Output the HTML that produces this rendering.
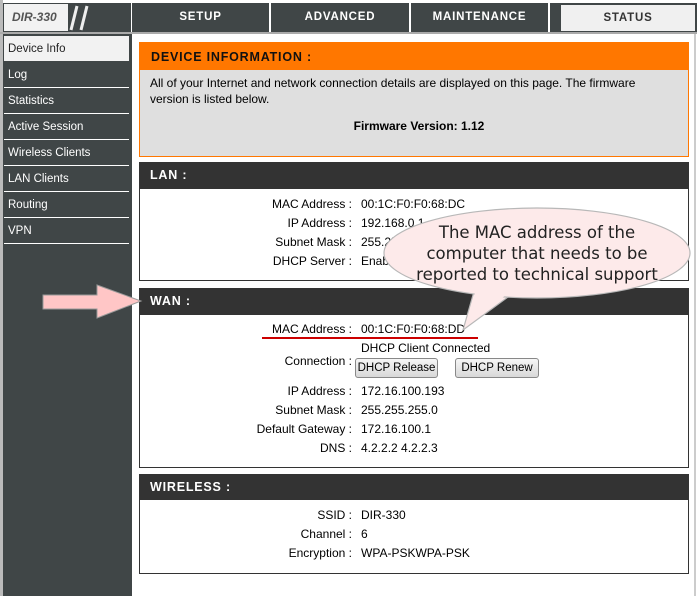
<!DOCTYPE html>
<html><head><style>
*{margin:0;padding:0;box-sizing:border-box}
body{width:697px;height:596px;background:#fff;position:relative;overflow:hidden;font-family:"Liberation Sans",Tahoma,sans-serif;font-size:12px;color:#000}
.abs{position:absolute}
.tab{position:absolute;top:3px;height:29px;background:#404647;color:#fff;font-weight:bold;font-size:11.5px;letter-spacing:0.8px;text-align:center;line-height:29px}
.side{position:absolute;left:3px;top:34px;width:129px;height:562px;background:#404647}
.si{position:absolute;left:1px;width:125px;height:26px;color:#fff;font-size:11.5px;line-height:26px;padding-left:4px;border-bottom:1px solid #fff}
.hd{position:absolute;left:139px;width:550px;height:27px;background:#333;color:#fff;font-weight:bold;font-size:12.5px;letter-spacing:0.8px;line-height:27px;padding-left:11px}
.bx{position:absolute;left:139px;width:550px;border:1px solid #333;border-top:none;background:#fff}
.l{position:absolute;width:352px;text-align:right;left:0}
.v{position:absolute;left:361px}
.btn{position:absolute;height:20px;border:1px solid #888;border-radius:3px;background:linear-gradient(#f6f6f6,#d8d8d8);font-size:11.5px;line-height:18px;text-align:center}
</style></head><body>
<div class="abs" style="left:0;top:0;width:3px;height:596px;background:#bbb"></div>
<div class="abs" style="left:3px;top:3px;width:128px;height:29px;background:#404647"></div>
<div class="abs" style="left:4px;top:4px;width:64px;height:27px;background:#f2f2f2;font-style:italic;font-weight:bold;color:#555;font-size:12px;line-height:27px;padding-left:8px">DIR-330</div>
<svg class="abs" style="left:68px;top:4px" width="30" height="28"><path d="M3 26 L9 2 M13 26 L19 2" stroke="#eee" stroke-width="3"/></svg>
<div class="tab" style="left:132px;width:137px">SETUP</div>
<div class="tab" style="left:271px;width:138px">ADVANCED</div>
<div class="tab" style="left:411px;width:137px">MAINTENANCE</div>
<div class="tab" style="left:550px;width:147px;background:#404647"></div>
<div class="tab" style="left:561px;width:134px;background:#f0f0f0;color:#333;top:5px;height:26px;line-height:26px">STATUS</div>
<div class="abs" style="left:0;top:32px;width:697px;height:2px;background:#aaa"></div>
<div class="side">
<div class="si" style="top:2px;background:#f2f2f2;color:#222;border:none;height:25px">Device Info</div>
<div class="si" style="top:28px">Log</div>
<div class="si" style="top:54px">Statistics</div>
<div class="si" style="top:80px">Active Session</div>
<div class="si" style="top:106px">Wireless Clients</div>
<div class="si" style="top:132px">LAN Clients</div>
<div class="si" style="top:158px">Routing</div>
<div class="si" style="top:184px">VPN</div>
</div>
<div class="abs" style="left:694px;top:34px;width:2px;height:562px;background:#ccc"></div>

<div class="abs" style="left:139px;top:42px;width:550px;height:115px;border:1px solid #f70;background:#dfdfdf">
<div style="background:#f70;height:27px;font-weight:bold;font-size:12.5px;letter-spacing:0.8px;line-height:28px;padding-left:11px;color:#111">DEVICE INFORMATION :</div>
<div style="padding:5px 10px;line-height:16px;width:520px">All of your Internet and network connection details are displayed on this page. The firmware version is listed below.</div>
<div style="text-align:center;font-weight:bold;margin-top:7px;padding-left:10px">Firmware Version: 1.12</div>
</div>

<div class="hd" style="top:162px">LAN :</div>
<div class="bx" style="top:189px;height:92px"></div>
<div class="abs" style="left:0;top:197px;width:697px">
<div class="l" style="top:0">MAC Address :</div><div class="v" style="top:0">00:1C:F0:F0:68:DC</div>
<div class="l" style="top:19px">IP Address :</div><div class="v" style="top:19px">192.168.0.1</div>
<div class="l" style="top:38px">Subnet Mask :</div><div class="v" style="top:38px">255.255.255.0</div>
<div class="l" style="top:57px">DHCP Server :</div><div class="v" style="top:57px">Enabled</div>
</div>

<div class="hd" style="top:288px">WAN :</div>
<div class="bx" style="top:315px;height:153px"></div>
<div class="abs" style="left:0;top:322px;width:697px">
<div class="l" style="top:0">MAC Address :</div><div class="v" style="top:0">00:1C:F0:F0:68:DD</div>
<div class="v" style="top:19px">DHCP Client Connected</div>
<div class="l" style="top:32px">Connection :</div>
<div class="btn" style="left:355px;top:36px;width:83px">DHCP Release</div>
<div class="btn" style="left:455px;top:36px;width:84px">DHCP Renew</div>
<div class="l" style="top:62px">IP Address :</div><div class="v" style="top:62px">172.16.100.193</div>
<div class="l" style="top:81px">Subnet Mask :</div><div class="v" style="top:81px">255.255.255.0</div>
<div class="l" style="top:100px">Default Gateway :</div><div class="v" style="top:100px">172.16.100.1</div>
<div class="l" style="top:119px">DNS :</div><div class="v" style="top:119px">4.2.2.2 4.2.2.3</div>
</div>
<div class="abs" style="left:262px;top:337px;width:216px;height:2px;background:#c00"></div>

<div class="hd" style="top:474px">WIRELESS :</div>
<div class="bx" style="top:500px;height:74px"></div>
<div class="abs" style="left:0;top:508px;width:697px">
<div class="l" style="top:0">SSID :</div><div class="v" style="top:0">DIR-330</div>
<div class="l" style="top:19px">Channel :</div><div class="v" style="top:19px">6</div>
<div class="l" style="top:38px">Encryption :</div><div class="v" style="top:38px">WPA-PSKWPA-PSK</div>
</div>

<svg class="abs" style="left:0;top:0" width="697" height="596">
<path d="M43 295 L97 295 L97 285 L141 301 L97 318 L97 309 L43 309 Z" fill="#ffc6c6" stroke="#999" stroke-width="1"/>
<path d="M475 288 L463 330 L512 294 Z" fill="#fdeaea" stroke="#b8b8b8" stroke-width="1.2"/>
<ellipse cx="537" cy="253" rx="153" ry="45" fill="#fdeaea" stroke="#b8b8b8" stroke-width="1.2"/>
<path d="M477 286 L466 325 L510 292 Z" fill="#fdeaea"/>
</svg>
<div class="abs" style="left:407px;top:222px;width:260px;text-align:center;font-family:'DejaVu Sans',sans-serif;font-size:16.5px;line-height:21px;color:#222">The MAC address of the computer that needs to be reported to technical support</div>
</body></html>
